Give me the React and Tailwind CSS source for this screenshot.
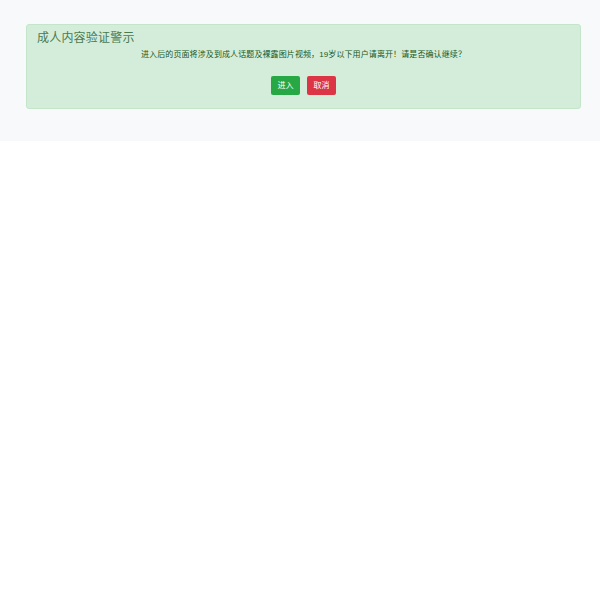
export default function App() {
  return (
    <div className="bg-white min-h-[600px]" style={{ fontFamily: '"Liberation Sans", "Noto Sans CJK SC", sans-serif' }}>
      <div className="bg-[#f8f9fa] pt-[24px] pb-[32px] pl-[26px] pr-[19px]">
        <div className="bg-[#d4edda] border border-[#c3e6cb] rounded-[3px] h-[85px] px-[10px] pt-[5px] text-[#155724]">
          <h4 className="text-[12px] leading-[16px] text-[#4b7a50] tracking-[0.2px]">成人内容验证警示</h4>
          <p className="text-center text-[8px] leading-[12px] mt-[3px] tracking-[0.1px]">
            进入后的页面将涉及到成人话题及裸露图片视频，19岁以下用户请离开！请是否确认继续？
          </p>
          <div className="flex justify-center gap-[7px] mt-[15px]">
            <button className="w-[29px] h-[19px] bg-[#28a745] text-white text-[8px] rounded-[2px]">进入</button>
            <button className="w-[29px] h-[19px] bg-[#dc3545] text-white text-[8px] rounded-[2px]">取消</button>
          </div>
        </div>
      </div>
    </div>
  )
}
